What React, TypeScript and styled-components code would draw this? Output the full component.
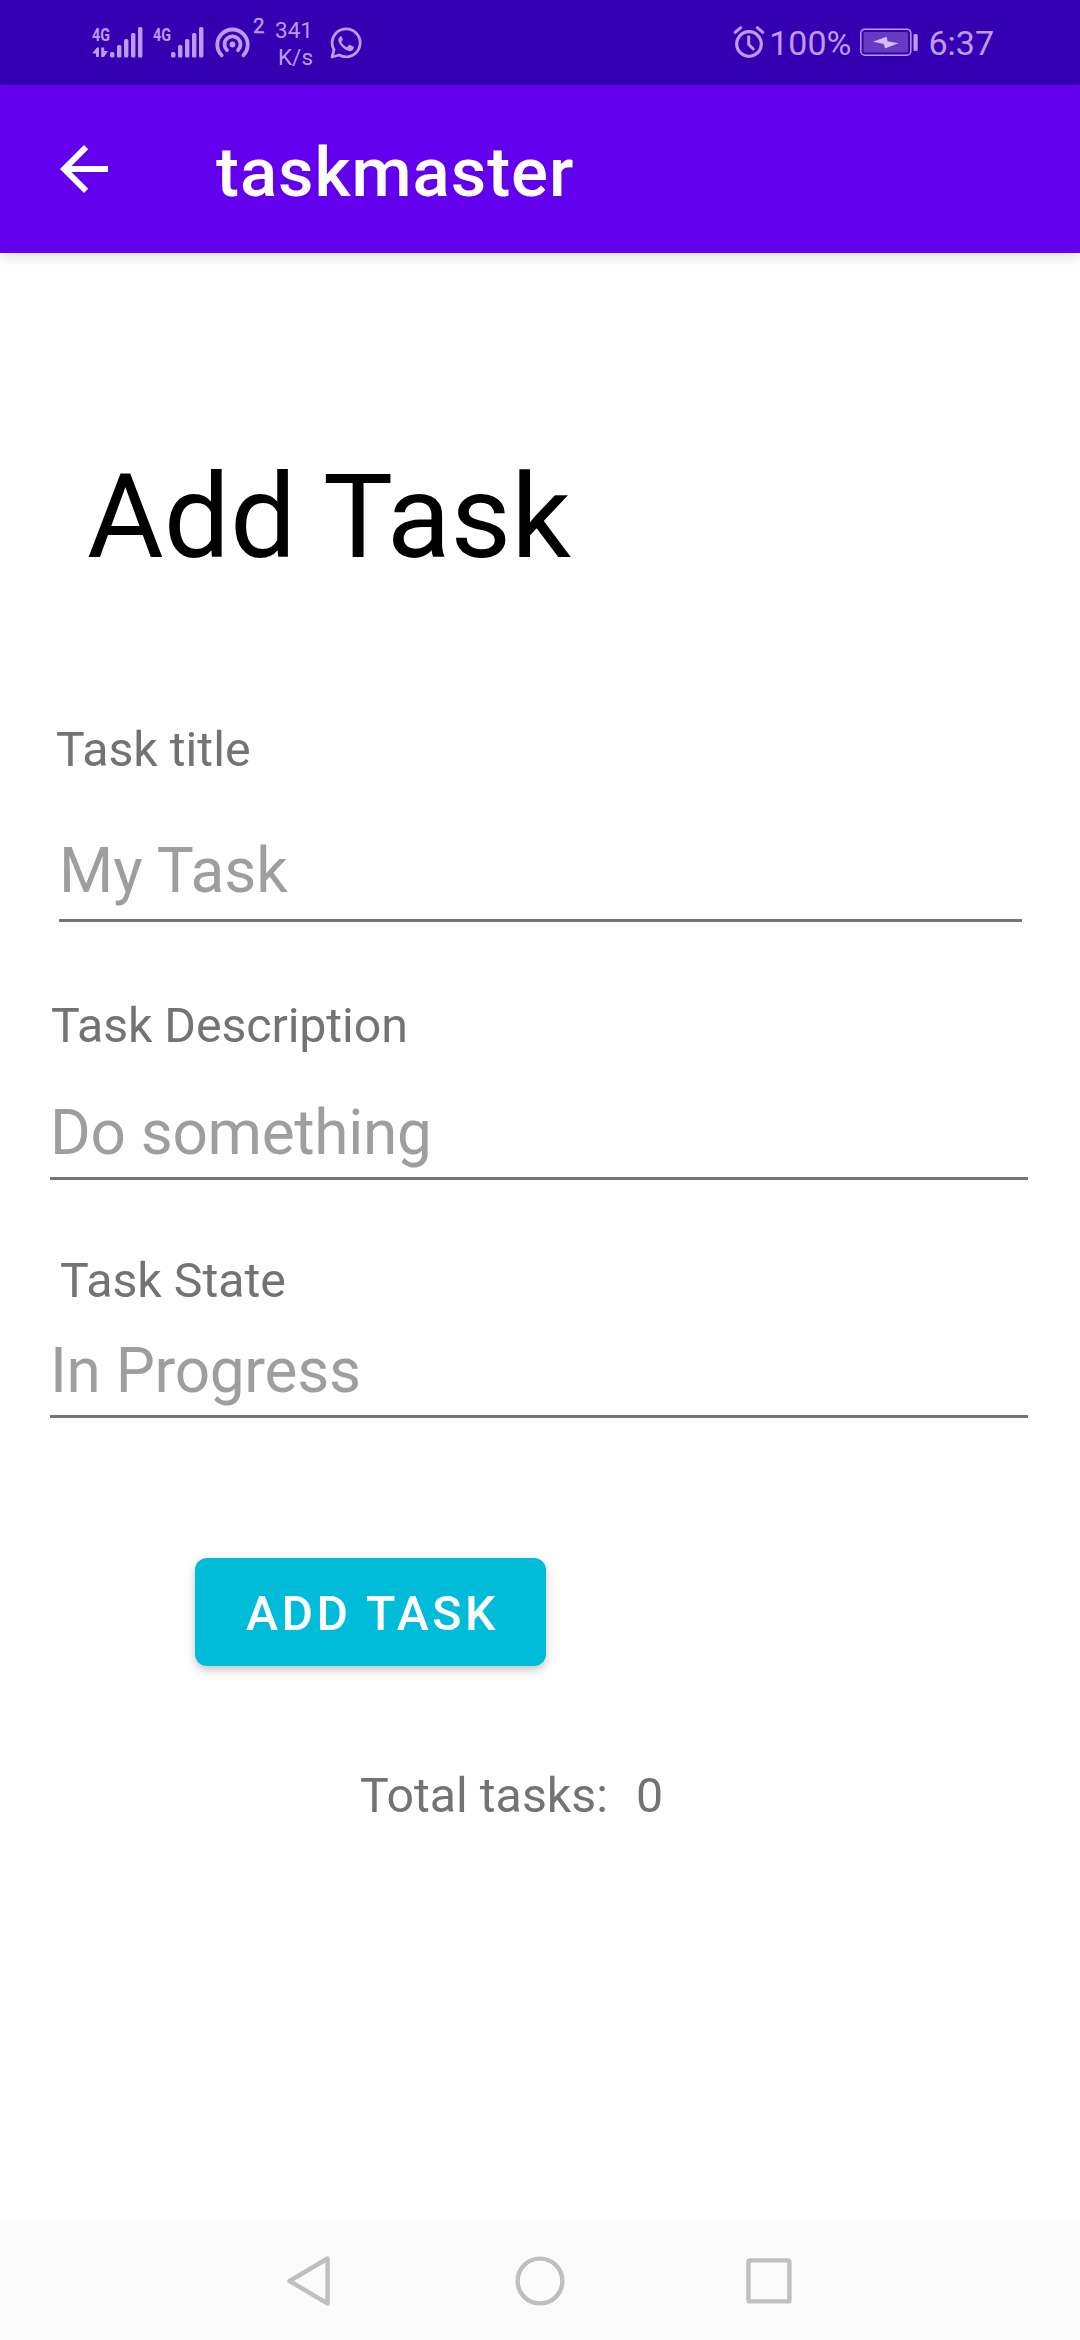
import React from 'react';
import styled, { createGlobalStyle } from 'styled-components';

const STATUS_TINT = '#bd9bf3';

const GlobalStyle = createGlobalStyle`
  *, *::before, *::after { box-sizing: border-box; }
  body { margin: 0; background: #fefefe; font-family: Roboto, "Noto Sans", sans-serif; }
`;

const Screen = styled.div`
  display: flex;
  flex-direction: column;
  width: 1080px;
  height: 2340px;
  background: #fefefe;
  overflow: hidden;
`;

const StatusBar = styled.header`
  display: flex;
  justify-content: space-between;
  flex: none;
  height: 85px;
  padding: 0 86px 0 92px;
  background: #3400b2;
  color: ${STATUS_TINT};
`;

const StatusGroup = styled.div`
  display: flex;
  align-items: flex-start;
  svg { display: block; flex: none; }
`;

const Superscript = styled.span`
  margin: 14px 0 0 2px;
  width: 14px;
  font-size: 20.5px;
  line-height: 24px;
  -webkit-text-stroke: 0.4px currentColor;
`;

const NetSpeed = styled.div`
  display: flex;
  flex-direction: column;
  align-items: flex-end;
  width: 40px;
  margin: 17px 17px 0 6px;
  font-size: 22.5px;
  line-height: 27px;
`;

const StatusText = styled.span<{ $left: number }>`
  margin: 23px 0 0 ${(p) => p.$left}px;
  font-size: 34px;
  line-height: 40px;
  white-space: nowrap;
`;

const BatterySlot = styled.span`
  margin-left: 9px;
`;

const Toolbar = styled.div`
  display: flex;
  align-items: center;
  flex: none;
  height: 168px;
  padding-left: 48px;
  background: #6200ee;
  box-shadow: 0 2px 12px rgba(0, 0, 0, 0.16);
`;

const BackButton = styled.button`
  display: flex;
  width: 72px;
  height: 72px;
  padding: 0;
  border: 0;
  background: none;
`;

const AppTitle = styled.h1`
  margin: 7px 0 0 96px;
  color: #fff;
  font-size: 69px;
  font-weight: 500;
  line-height: 80px;
  letter-spacing: 0.95px;
`;

const Form = styled.main`
  display: flex;
  flex-direction: column;
  align-items: flex-start;
  flex: 1;
  padding-top: 194px;
`;

const Heading = styled.h2`
  margin: 0 0 0 87px;
  color: #000;
  font-size: 117.5px;
  font-weight: 400;
  line-height: 140px;
`;

const Label = styled.label<{ $top: number; $left: number; $tracking?: number }>`
  margin: ${(p) => p.$top}px 0 0 ${(p) => p.$left}px;
  color: #737373;
  font-size: 48.3px;
  line-height: 58px;
  letter-spacing: ${(p) => p.$tracking ?? 0}px;
`;

const Field = styled.input<{ $top: number; $left: number; $right: number; $gap: number; $tracking?: number }>`
  width: calc(100% - ${(p) => p.$left + p.$right}px);
  height: ${(p) => 78 + p.$gap}px;
  margin: ${(p) => p.$top}px ${(p) => p.$right}px 0 ${(p) => p.$left}px;
  padding: 0 0 ${(p) => p.$gap}px;
  border: 0;
  border-bottom: 3px solid #747474;
  border-radius: 0;
  outline: 0;
  background: none;
  font: 400 62.1px/75px Roboto, "Noto Sans", sans-serif;
  letter-spacing: ${(p) => p.$tracking ?? 0}px;
  &::placeholder { color: #9e9e9e; opacity: 1; }
`;

const SubmitButton = styled.button`
  width: 351px;
  height: 108px;
  margin: 140px 0 0 195px;
  padding: 3px 0 0 4px;
  border: 0;
  border-radius: 12px;
  background: #00bcd8;
  box-shadow: 0 4px 8px rgba(0, 0, 0, 0.22);
  color: #fff;
  font: 500 48.3px/58px Roboto, "Noto Sans", sans-serif;
  letter-spacing: 3.5px;
  text-transform: uppercase;
`;

const Totals = styled.p`
  display: flex;
  gap: 28px;
  margin: 101px 0 0 360px;
  color: #737373;
  font-size: 48.3px;
  line-height: 58px;
`;

const NavBar = styled.nav`
  display: flex;
  justify-content: space-between;
  flex: none;
  height: 119px;
  padding: 30px 280px 0;
  background: #fbfbfb;
`;

function Signal({ data }: { data?: boolean }) {
  const width = data ? 61 : 62;
  return (
    <svg width={width} height="85" viewBox={`0 0 ${width} 85`} fill="currentColor">
      <text
        x="0"
        y="41"
        fontFamily="Roboto, sans-serif"
        fontWeight="700"
        fontSize="19"
        textLength="18"
        lengthAdjust="spacingAndGlyphs"
      >
        4G
      </text>
      {data && <path d="M0.800 52.500 5 47.500H7V57H4V53.500H0.800zM9.200 47.500h3v3.500H16L12 57H9.200z" />}
      {[52, 45, 39, 33, 27].map((top, i) => (
        <rect key={top} x={18 + i * 7} y={top} width="4.4" height={57.5 - top} rx="1.6" />
      ))}
    </svg>
  );
}

function Hotspot() {
  return (
    <svg width="36" height="85" viewBox="0 0 36 85" fill="none" stroke="currentColor" strokeWidth="3.8">
      <path d="M6.6 55.3a15.2 15.2 0 1 1 21.8 0" strokeLinecap="round" />
      <path d="M12 50.2a8 8 0 1 1 11 0" strokeLinecap="round" />
      <circle cx="17.5" cy="44.5" r="2.9" fill="currentColor" stroke="none" />
    </svg>
  );
}

function WhatsApp() {
  return (
    <svg width="32" height="85" viewBox="0 0 32 85" fill="none">
      <path d="M2 57l2-7.2a14 14 0 1 1 5.2 5.2z" stroke="currentColor" strokeWidth="2.8" strokeLinejoin="round" />
      <path
        d="M10.5 36.4c-2 1.2-2.7 3.5-1.7 5.6 2.2 4.6 5.6 7.6 10 9 2.3.7 4.6-.8 5-3 .2-.9 0-1.2-.7-1.6l-3-1.4c-.6-.3-1-.2-1.4.3l-1.2 1.5c-.4.4-.8.4-1.3.2-2-1-3.7-2.5-4.7-4.4-.3-.5-.2-.8.1-1.2l1-1.3c.3-.4.3-.7.1-1.2l-1.2-2.7c-.2-.4-.5-.1-1 .2z"
        fill="currentColor"
      />
    </svg>
  );
}

function Alarm() {
  return (
    <svg width="32" height="85" viewBox="0 0 32 85" fill="none" stroke="currentColor">
      <circle cx="16" cy="44" r="12.3" strokeWidth="3.2" />
      <path d="M2.2 32.3 7.7 27.7M29.8 32.3l-5.5-4.6" strokeWidth="3" strokeLinecap="round" />
      <path d="M15.7 36.8v7.7l4.5 4.5" strokeWidth="3" strokeLinecap="round" strokeLinejoin="round" />
    </svg>
  );
}

function Battery() {
  return (
    <svg width="60" height="85" viewBox="0 0 60 85">
      <rect x="0.8" y="29.2" width="50" height="26" rx="4" fill="none" stroke="currentColor" strokeWidth="1.5" />
      <rect x="3.5" y="32" width="44.6" height="20.5" rx="1.5" fill="#673cc4" />
      <path d="M13 41.8 26.5 36.8 27.6 41.2 38.5 43.2 25 48.5 23.8 44z" fill="#d4bcf8" />
      <rect x="53.5" y="34" width="4.2" height="17" rx="1.5" fill="currentColor" />
    </svg>
  );
}

export default function App() {
  return (
    <Screen>
      <GlobalStyle />
      <StatusBar>
        <StatusGroup>
          <Signal data />
          <Signal />
          <Hotspot />
          <Superscript>2</Superscript>
          <NetSpeed>
            <span>341</span>
            <span>K/s</span>
          </NetSpeed>
          <WhatsApp />
        </StatusGroup>
        <StatusGroup>
          <Alarm />
          <StatusText $left={4}>100%</StatusText>
          <BatterySlot>
            <Battery />
          </BatterySlot>
          <StatusText $left={8}>6:37</StatusText>
        </StatusGroup>
      </StatusBar>
      <Toolbar>
        <BackButton aria-label="Back">
          <svg width="72" height="72" viewBox="0 0 24 24" fill="#fff">
            <path d="M20 11H7.83l5.59-5.59L12 4l-8 8 8 8 1.41-1.41L7.83 13H20v-2z" />
          </svg>
        </BackButton>
        <AppTitle>taskmaster</AppTitle>
      </Toolbar>
      <Form>
        <Heading>Add Task</Heading>
        <Label htmlFor="title" $top={134} $left={56}>Task title</Label>
        <Field id="title" placeholder="My Task" $top={54} $left={59} $right={58} $gap={11} />
        <Label htmlFor="description" $top={75} $left={51} $tracking={-0.1}>Task Description</Label>
        <Field id="description" placeholder="Do something" $top={40} $left={50} $right={52} $gap={7} $tracking={-0.3} />
        <Label htmlFor="state" $top={72} $left={60}>Task State</Label>
        <Field id="state" placeholder="In Progress" $top={23} $left={50} $right={52} $gap={7} $tracking={-0.3} />
        <SubmitButton type="button">Add Task</SubmitButton>
        <Totals>
          <span>Total tasks:</span>
          <span>0</span>
        </Totals>
      </Form>
      <NavBar>
        <svg width="60" height="60" viewBox="0 0 60 60" fill="none" stroke="#bfbfbf" strokeWidth="4.4" strokeLinejoin="round">
          <path d="M47.600 7.500v45L9.500 30z" />
        </svg>
        <svg width="60" height="60" viewBox="0 0 60 60" fill="none" stroke="#bfbfbf" strokeWidth="4.4">
          <circle cx="30" cy="30" r="22.4" />
        </svg>
        <svg width="60" height="60" viewBox="0 0 60 60" fill="none" stroke="#bfbfbf" strokeWidth="4.4">
          <rect x="8.4" y="9.4" width="41" height="41" rx="1.5" />
        </svg>
      </NavBar>
    </Screen>
  );
}
